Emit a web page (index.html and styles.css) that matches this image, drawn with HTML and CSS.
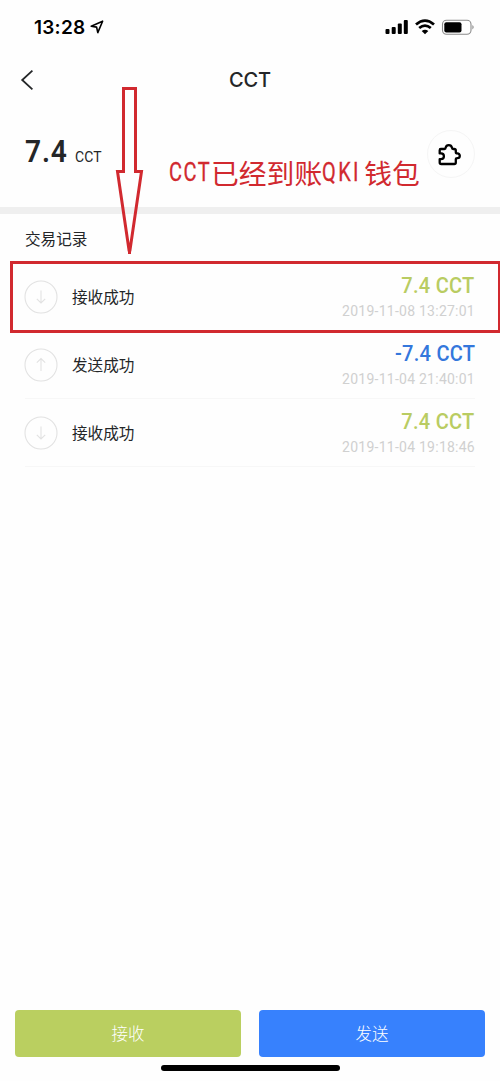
FILE: index.html
```html
<!DOCTYPE html>
<html lang="zh-CN">
<head>
<meta charset="utf-8">
<meta name="viewport" content="width=device-width">
<title>CCT</title>
<link rel="stylesheet" href="styles.css">
</head>
<body>
<div class="screen">
  <header class="status">
    <span class="time">13:28</span>
    <svg class="locate" width="14" height="14" viewBox="0 0 14 14"><path d="M1.2 6.2 12.6 1.2 7.8 12.6 6.6 7.1Z"/></svg>
    <svg class="signals" width="90" height="18" viewBox="0 0 90 18">
      <rect x="0.5" y="11" width="4" height="5" rx="1"/><rect x="6.7" y="9" width="4" height="7" rx="1"/><rect x="12.8" y="5.5" width="4" height="10.5" rx="1"/><rect x="18.8" y="2" width="4" height="14" rx="1"/>
      <g class="wifi"><path d="M31 6.5Q40 -1.2 49 6.5"/><path d="M34.2 10Q40 5.2 45.8 10"/></g>
      <path d="M36.7 13Q40 10.5 43.3 13L40 16.2Z"/>
      <rect class="battery" x="57.5" y="2.3" width="28.5" height="14" rx="4"/>
      <rect x="59.3" y="4.2" width="17.2" height="10.2" rx="2"/>
      <path class="cap" d="M87.4 7Q90 9.2 87.4 11.4Z"/>
    </svg>
  </header>
  <nav class="nav">
    <svg class="back" width="14" height="22" viewBox="0 0 14 22"><path d="M12.4 1.7 2.2 11 12.4 20.3"/></svg>
    <h1>CCT</h1>
  </nav>
  <section class="balance">
    <div class="total"><span class="amount">7.4</span><span class="unit">CCT</span></div>
    <button class="puzzle" aria-label="插件"><svg width="28" height="28" viewBox="0 0 28 28"><path d="M4.8 9H8.4Q9.6 9 9.6 7.7A3.3 3.3 0 0 1 16 7.7Q16 9 17.2 9H18.2Q19.8 9 19.8 10.6V12.2Q19.8 13.4 21.4 13.4A2.4 2.4 0 0 1 21.4 18.2Q19.8 18.2 19.8 19.5V22.4Q19.8 24 18.2 24H5.3Q3.7 24 3.7 22.4V19.2H5A2.9 2.9 0 0 0 5 13.4H3.7V10.3Q3.7 9 4.8 9Z"/></svg></button>
  </section>
  <h2 class="title">交易记录</h2>
  <main class="records">
    <article class="record">
      <svg class="direction" width="34" height="34" viewBox="0 0 34 34"><circle cx="17" cy="17" r="16"/><path d="M17 10.5V23M12.8 18.8 17 23 21.2 18.8"/></svg>
      <span class="name">接收成功</span>
      <div class="detail"><b>7.4 CCT</b><time>2019-11-08 13:27:01</time></div>
    </article>
    <article class="record">
      <svg class="direction" width="34" height="34" viewBox="0 0 34 34"><circle cx="17" cy="17" r="16"/><path d="M17 23V10.5M12.8 14.7 17 10.5 21.2 14.7"/></svg>
      <span class="name">发送成功</span>
      <div class="detail sent"><b>-7.4 CCT</b><time>2019-11-04 21:40:01</time></div>
    </article>
    <article class="record">
      <svg class="direction" width="34" height="34" viewBox="0 0 34 34"><circle cx="17" cy="17" r="16"/><path d="M17 10.5V23M12.8 18.8 17 23 21.2 18.8"/></svg>
      <span class="name">接收成功</span>
      <div class="detail"><b>7.4 CCT</b><time>2019-11-04 19:18:46</time></div>
    </article>
  </main>
  <footer class="actions"><button class="receive">接收</button><button class="send">发送</button></footer>
  <div class="home"></div>
  <svg class="arrow" width="30" height="170" viewBox="0 0 30 170"><path d="M8.5 2.5H20.5V85.5H26.5L15 164H14L2.5 85.5H8.5Z"/><path d="M14.5 160V168"/></svg>
  <p class="note"><span class="word">CCT</span>已经到账<span class="word code">QKI</span>钱包</p>
  <div class="highlight"></div>
</div>
</body>
</html>
```

FILE: styles.css
```css
* { box-sizing: border-box; }
body { margin: 0; background: #fefefe; font-family: Roboto, "Noto Sans CJK SC", sans-serif; color: #242628; }
button { border: 0; padding: 0; font: inherit; }
.screen { position: relative; width: 500px; height: 1081px; display: flex; flex-direction: column; overflow: hidden; }
.status { height: 54px; display: flex; align-items: center; padding: 0 25px 0 34px; color: #000; }
.time { padding-top: 1px; font: 600 19px/24px Inter, sans-serif; width: 52px; letter-spacing: .25px; white-space: nowrap; }
.locate { margin-left: 4px; fill: none; stroke: #000; stroke-width: 1.6; stroke-linejoin: round; }
.signals { margin-left: auto; }
.wifi { fill: none; stroke: #000; stroke-width: 2.8; }
.battery { fill: none; stroke: #8b8b8b; stroke-width: 1.1; }
.cap { fill: #8b8b8b; }
.nav { height: 52px; display: grid; grid-template-columns: 34px 1fr 34px; align-items: center; padding: 0 20px; }
.back { fill: none; stroke: #242628; stroke-width: 1.8; }
.nav h1 { margin: 0; text-align: center; font: 500 20px/26px Inter, sans-serif; letter-spacing: -.2px; }
.balance { height: 108px; border-bottom: 7px solid #efefef; display: flex; justify-content: space-between; padding: 24px 25px 0; }
.total { height: 42px; display: flex; align-items: baseline; gap: 9px; }
.amount { font-size: 32px; line-height: 42px; font-weight: 600; letter-spacing: 1px; width: 41px; transform: scaleX(.88); transform-origin: 0 50%; }
.unit { font-size: 15.5px; font-weight: 400; letter-spacing: .2px; transform: scaleX(.9); transform-origin: 0 50%; }
.puzzle { width: 48px; height: 48px; border: 1px solid #f5f5f5; border-radius: 50%; background: #fefefe; display: grid; place-items: center; }
.puzzle svg { margin-right: 2px; }
.puzzle path { fill: none; stroke: #000; stroke-width: 2.3; stroke-linejoin: round; }
.title { height: 49px; margin: 0; padding: 0 25px; font: 400 15.6px/48px "Noto Sans CJK SC", sans-serif; }
.records { padding: 0 25px; }
.record { height: 68px; border-bottom: 1px solid #f7f7f7; display: flex; align-items: center; }
.direction { margin-left: -1px; fill: none; stroke: #e2e2e2; stroke-width: 1.1; }
.name { margin-left: 14px; padding-bottom: 2px; font: 400 15.6px/24px "Noto Sans CJK SC", sans-serif; }
.detail { margin-left: auto; padding-top: 3px; display: flex; flex-direction: column; align-items: flex-end; color: #b9cc62; }
.detail b { font-size: 22px; line-height: 26px; font-weight: 500; letter-spacing: .3px; transform: scaleX(.91); transform-origin: 100% 50%; }
.sent { color: #3477dc; }
.detail time { font-size: 14px; line-height: 25px; letter-spacing: .25px; color: #d0d0d0; }
.actions { margin-top: auto; padding: 0 15px; display: grid; grid-template-columns: 1fr 1fr; gap: 18px; }
.actions button { height: 47px; border-radius: 4px; color: #fff; font: 300 16.5px/47px "Noto Sans CJK SC", sans-serif; }
.actions .receive { background: #bacf60; }
.actions .send { background: #3781fd; }
.home { flex: none; width: 179px; height: 6px; border-radius: 3px; background: #000; margin: 8px auto 10px 161px; }
.arrow { position: absolute; left: 115px; top: 86px; fill: none; stroke: #d1292f; stroke-width: 3; }
.note { position: absolute; left: 169px; top: 152px; margin: 0; display: flex; color: #d1292f; font: 400 27.8px/40px "Noto Sans CJK SC", sans-serif; white-space: nowrap; }
.word { width: 42px; padding-top: 1px; font-family: Roboto, sans-serif; font-size: 25px; letter-spacing: 1.8px; transform: scaleX(.8); transform-origin: 0 50%; -webkit-text-stroke: .3px #d1292f; }
.code { letter-spacing: 3px; }
.highlight { position: absolute; left: 10px; top: 261px; width: 491px; height: 72px; border: 3px solid #d1292f; }
```
